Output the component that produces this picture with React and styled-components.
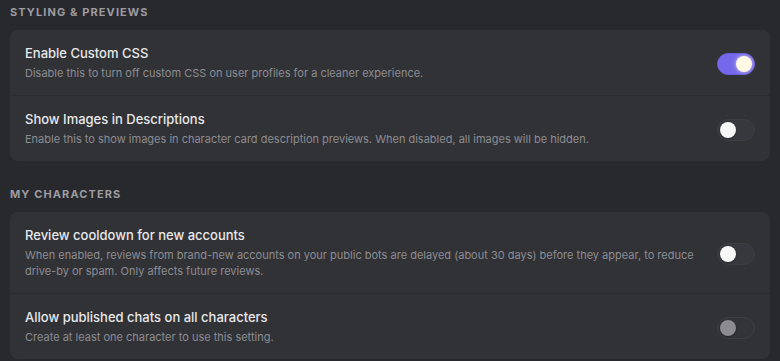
import React from "react";
import styled, { createGlobalStyle } from "styled-components";

const GlobalStyle = createGlobalStyle`
    html, body {
        margin: 0;
        padding: 0;
        background: #28292d;
    }
    body {
        font-family: Inter, "Noto Sans", sans-serif;
        -webkit-font-smoothing: antialiased;
    }
`;

const sections = [
    {
        title: "Styling & Previews",
        rows: [
            {
                label: "Enable Custom CSS",
                desc: "Disable this to turn off custom CSS on user profiles for a cleaner experience.",
                state: "on"
            },
            {
                label: "Show Images in Descriptions",
                desc: "Enable this to show images in character card description previews. When disabled, all images will be hidden.",
                state: "off"
            }
        ]
    },
    {
        title: "My Characters",
        rows: [
            {
                label: "Review cooldown for new accounts",
                desc: "When enabled, reviews from brand-new accounts on your public bots are delayed (about 30 days) before they appear, to reduce drive-by or spam. Only affects future reviews.",
                state: "off"
            },
            {
                label: "Allow published chats on all characters",
                desc: "Create at least one character to use this setting.",
                state: "disabled"
            }
        ]
    }
];

const App = () => {
    return (
        <Page>
            <GlobalStyle />
            {sections.map(section => (
                <Section key={section.title}>
                    <SectionTitle>{section.title}</SectionTitle>
                    <Card>
                        {section.rows.map(row => (
                            <Row key={row.label}>
                                <TextColumn>
                                    <Label>{row.label}</Label>
                                    <Description>{row.desc}</Description>
                                </TextColumn>
                                <Toggle state={row.state}>
                                    <Knob state={row.state} />
                                </Toggle>
                            </Row>
                        ))}
                    </Card>
                </Section>
            ))}
        </Page>
    );
};

const Page = styled.div`
    padding: 5px 10px 4px 10px;
    display: flex;
    flex-direction: column;
    gap: 26px;
`;

const Section = styled.div`
    display: flex;
    flex-direction: column;
    gap: 11px;
`;

const SectionTitle = styled.div`
    font-size: 11px;
    line-height: 14px;
    font-weight: 700;
    letter-spacing: 1.1px;
    text-transform: uppercase;
    color: #9c9ca2;
`;

const Card = styled.div`
    background: #313236;
    border-radius: 8px;
    overflow: hidden;
`;

const Row = styled.div`
    display: flex;
    align-items: center;
    gap: 18px;
    padding: 14px 15px;
    & + & {
        border-top: 1px solid #2b2c30;
    }
`;

const TextColumn = styled.div`
    flex: 1;
    display: flex;
    flex-direction: column;
    gap: 3px;
`;

const Label = styled.div`
    font-size: 13px;
    line-height: 18px;
    font-weight: 500;
    color: #e8e8ea;
`;

const Description = styled.div`
    font-size: 11px;
    line-height: 16px;
    color: #8c8c92;
`;

const Toggle = styled.div`
    position: relative;
    flex: none;
    width: 38px;
    height: 22px;
    border-radius: 11px;
    box-sizing: border-box;
    background: ${p => (p.state === "on" ? "#7668ea" : p.state === "disabled" ? "#333438" : "#37383d")};
    border: 1px solid ${p => (p.state === "on" ? "#6a5ce0" : "#3d3e43")};
    margin-top: 2px;
`;

const Knob = styled.div`
    position: absolute;
    top: 2px;
    left: ${p => (p.state === "on" ? "18px" : "2px")};
    width: 16px;
    height: 16px;
    border-radius: 50%;
    background: ${p => (p.state === "on" ? "#fff9e6" : p.state === "disabled" ? "#8b8b90" : "#f7f7f7")};
    box-shadow: ${p => (p.state === "on" ? "0 0 4px rgba(255, 250, 220, 0.7)" : "0 1px 2px rgba(0, 0, 0, 0.3)")};
`;

export default App;
